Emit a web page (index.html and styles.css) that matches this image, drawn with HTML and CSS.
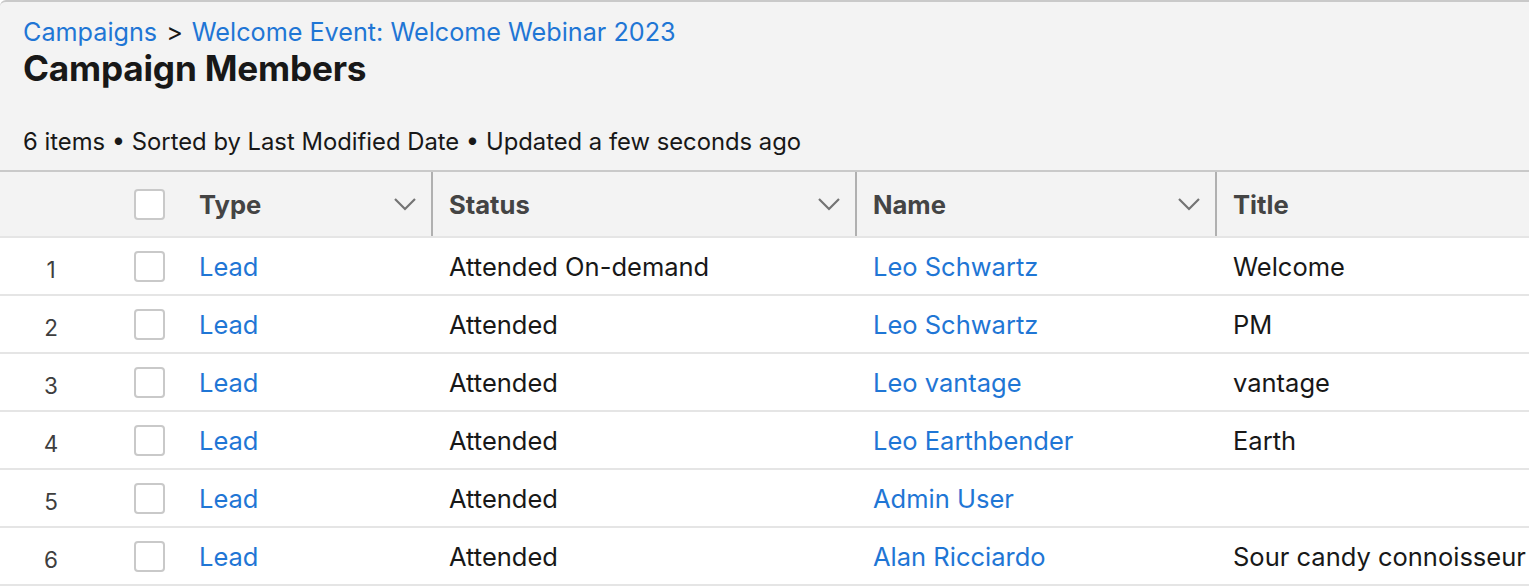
FILE: index.html
```html
<!DOCTYPE html>
<html lang="en">
<head>
<meta charset="utf-8">
<title>Campaign Members</title>
<link rel="stylesheet" href="styles.css">
</head>
<body>
<div class="page">
  <header class="page-head">
    <nav class="crumbs"><a href="#" class="link">Campaigns</a><span class="sep">&gt;</span><a href="#" class="link">Welcome Event: Welcome Webinar 2023</a></nav>
    <h1 class="title">Campaign Members</h1>
    <p class="meta">6 items • Sorted by Last Modified Date • Updated a few seconds ago</p>
  </header>
  <div class="table">
    <div class="row head">
      <div class="cell num"></div>
      <div class="cell chk"><span class="box"></span></div>
      <div class="cell col-type"><span class="th">Type</span><svg class="chev" viewBox="0 0 24 14"><path d="M2 2 L12 12 L22 2" fill="none" stroke="#747474" stroke-width="2.2"/></svg></div>
      <div class="cell col-status sepl"><span class="th">Status</span><svg class="chev" viewBox="0 0 24 14"><path d="M2 2 L12 12 L22 2" fill="none" stroke="#747474" stroke-width="2.2"/></svg></div>
      <div class="cell col-name sepl"><span class="th">Name</span><svg class="chev" viewBox="0 0 24 14"><path d="M2 2 L12 12 L22 2" fill="none" stroke="#747474" stroke-width="2.2"/></svg></div>
      <div class="cell col-title sepl"><span class="th">Title</span></div>
    </div>
    <div class="row first">
      <div class="cell num">1</div>
      <div class="cell chk"><span class="box"></span></div>
      <div class="cell col-type"><a href="#" class="link">Lead</a></div>
      <div class="cell col-status pad">Attended On-demand</div>
      <div class="cell col-name pad"><a href="#" class="link">Leo Schwartz</a></div>
      <div class="cell col-title pad">Welcome</div>
    </div>
    <div class="row">
      <div class="cell num">2</div>
      <div class="cell chk"><span class="box"></span></div>
      <div class="cell col-type"><a href="#" class="link">Lead</a></div>
      <div class="cell col-status pad">Attended</div>
      <div class="cell col-name pad"><a href="#" class="link">Leo Schwartz</a></div>
      <div class="cell col-title pad">PM</div>
    </div>
    <div class="row">
      <div class="cell num">3</div>
      <div class="cell chk"><span class="box"></span></div>
      <div class="cell col-type"><a href="#" class="link">Lead</a></div>
      <div class="cell col-status pad">Attended</div>
      <div class="cell col-name pad"><a href="#" class="link">Leo vantage</a></div>
      <div class="cell col-title pad">vantage</div>
    </div>
    <div class="row">
      <div class="cell num">4</div>
      <div class="cell chk"><span class="box"></span></div>
      <div class="cell col-type"><a href="#" class="link">Lead</a></div>
      <div class="cell col-status pad">Attended</div>
      <div class="cell col-name pad"><a href="#" class="link">Leo Earthbender</a></div>
      <div class="cell col-title pad">Earth</div>
    </div>
    <div class="row">
      <div class="cell num">5</div>
      <div class="cell chk"><span class="box"></span></div>
      <div class="cell col-type"><a href="#" class="link">Lead</a></div>
      <div class="cell col-status pad">Attended</div>
      <div class="cell col-name pad"><a href="#" class="link">Admin User</a></div>
      <div class="cell col-title pad"></div>
    </div>
    <div class="row">
      <div class="cell num">6</div>
      <div class="cell chk"><span class="box"></span></div>
      <div class="cell col-type"><a href="#" class="link">Lead</a></div>
      <div class="cell col-status pad">Attended</div>
      <div class="cell col-name pad"><a href="#" class="link">Alan Ricciardo</a></div>
      <div class="cell col-title pad">Sour candy connoisseur</div>
    </div>
  </div>
</div>
</body>
</html>
```
FILE: styles.css
```css
html, body {
  margin: 0;
  padding: 0;
  background: #ffffff;
  overflow: hidden;
}
body {
  font-family: Inter, "Noto Sans", "Liberation Sans", sans-serif;
  color: #181818;
}
.page {
  width: 1529px;
  height: 587px;
  overflow: hidden;
  background: #ffffff;
}
.page-head {
  background: #f3f3f3;
  border-top: 2px solid #c9c9c9;
  border-top-left-radius: 6px;
  padding: 15px 0 0 23px;
  height: 170px;
  box-sizing: border-box;
}
.crumbs {
  font-size: 25.2px;
  line-height: 30px;
  white-space: nowrap;
}
.sep {
  color: #181818;
  margin: 0 9px;
}
.link {
  color: #1f76d5;
  text-decoration: none;
}
.title {
  margin: 1px 0 0 0;
  font-size: 35.2px;
  line-height: 40px;
  font-weight: 700;
  color: #181818;
  letter-spacing: -0.2px;
}
.meta {
  margin: 41px 0 0 0;
  font-size: 23.8px;
  line-height: 26px;
  color: #181818;
  white-space: nowrap;
}
.table {
  width: 1700px;
}
.row {
  display: flex;
  height: 58px;
  border-bottom: 2px solid #e5e5e5;
  box-sizing: border-box;
  font-size: 25.5px;
  color: #181818;
}
.row.first {
  height: 58px;
}
.row.head {
  height: 68px;
  background: #f3f3f3;
  border-top: 2px solid #c9c9c9;
  border-bottom: 2px solid #e5e5e5;
}
.cell {
  display: flex;
  align-items: center;
  box-sizing: border-box;
  white-space: nowrap;
}
.num {
  width: 102px;
  justify-content: center;
  font-size: 22.5px;
  color: #3e3e3e;
  padding-top: 6px;
}
.chk {
  width: 81px;
  padding-left: 32px;
}
.box {
  display: block;
  width: 31px;
  height: 31px;
  box-sizing: border-box;
  border: 2px solid #c9c9c9;
  border-radius: 4px;
  background: #ffffff;
}
.col-type {
  width: 248px;
  padding-left: 16px;
}
.col-status {
  width: 424px;
  padding-left: 18px;
}
.col-name {
  width: 360px;
  padding-left: 18px;
}
.col-title {
  flex: 1;
  padding-left: 18px;
}
.sepl {
  border-left: 2px solid #b0b0b0;
  padding-left: 16px;
}
.head .cell {
  height: 100%;
}
.head .col-type, .head .col-status, .head .col-name {
  justify-content: space-between;
  padding-right: 14px;
}
.th {
  font-weight: 700;
  color: #444444;
  font-size: 25.6px;
}
.chev {
  width: 24px;
  height: 14px;
  display: block;
}
```
